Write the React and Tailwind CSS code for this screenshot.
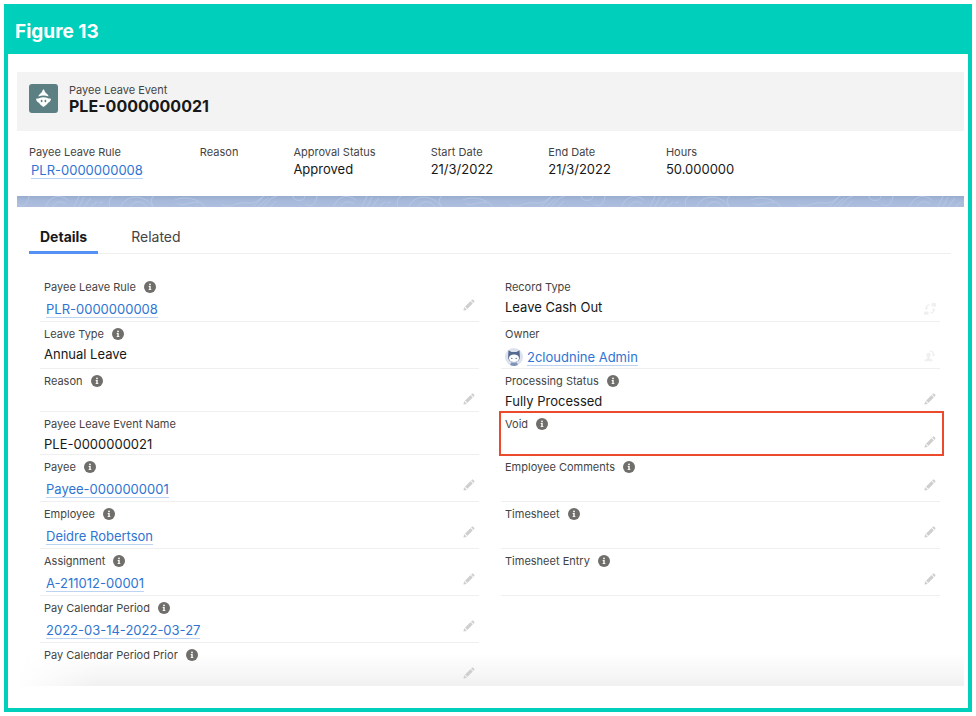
import React, { useState } from 'react';

const highlights = [
  { label: 'Payee Leave Rule', value: 'PLR-0000000008', link: true },
  { label: 'Reason', value: '' },
  { label: 'Approval Status', value: 'Approved' },
  { label: 'Start Date', value: '21/3/2022' },
  { label: 'End Date', value: '21/3/2022' },
  { label: 'Hours', value: '50.000000' },
];

const leftFields = [
  { label: 'Payee Leave Rule', value: 'PLR-0000000008', link: true, info: true, action: 'edit' },
  { label: 'Leave Type', value: 'Annual Leave', info: true, tall: true },
  { label: 'Reason', info: true, action: 'edit' },
  { label: 'Payee Leave Event Name', value: 'PLE-0000000021' },
  { label: 'Payee', value: 'Payee-0000000001', link: true, info: true, action: 'edit' },
  { label: 'Employee', value: 'Deidre Robertson', link: true, info: true, action: 'edit' },
  { label: 'Assignment', value: 'A-211012-00001', link: true, info: true, action: 'edit' },
  { label: 'Pay Calendar Period', value: '2022-03-14-2022-03-27', link: true, info: true, action: 'edit' },
  { label: 'Pay Calendar Period Prior', info: true, action: 'edit', last: true },
];

const rightFields = [
  { label: 'Record Type', value: 'Leave Cash Out', tall: true, action: 'change' },
  { label: 'Owner', value: '2cloudnine Admin', link: true, avatar: true, action: 'owner' },
  { label: 'Processing Status', value: 'Fully Processed', info: true, action: 'edit' },
  { label: 'Void', info: true, action: 'edit', marked: true },
  { label: 'Employee Comments', info: true, action: 'edit', tall: true },
  { label: 'Timesheet', info: true, action: 'edit', tall: true },
  { label: 'Timesheet Entry', info: true, action: 'edit', tall: true },
];

export default function App() {
  const [activeTab, setActiveTab] = useState('Details');

  return (
    <div className="bg-white p-1 font-['Inter',sans-serif] text-[#181818]">
      <div className="border-4 border-t-0 border-[#00cfbc]">
        <h1 className="bg-[#00cfbc] px-[7px] pt-[18px] pb-3 text-[19px] leading-5 font-bold text-white">Figure 13</h1>

        <div className="pt-[18px] pr-1 pb-[22px] pl-[9px]">
          <header className="flex items-center gap-[11px] bg-[#f3f3f3] px-3 pt-2.5 pb-[17px]">
            <RecordIcon />
            <div>
              <p className="text-[11px] leading-4 text-[#444]">Payee Leave Event</p>
              <h2 className="text-base leading-4 font-bold">PLE-0000000021</h2>
            </div>
          </header>

          <dl className="flex gap-[55px] px-3 pt-[13px] pb-[17px]">
            {highlights.map((item) => (
              <div key={item.label}>
                <dt className="text-[11px] leading-4 text-[#444]">{item.label}</dt>
                <dd className={`text-[13px] leading-[18px] ${item.link ? 'pt-px' : ''}`}>
                  {item.link ? <RecordLink>{item.value}</RecordLink> : item.value}
                </dd>
              </div>
            ))}
          </dl>

          <Contours />

          <div role="tablist" className="mr-[13px] ml-3 flex gap-[22px] border-b border-[#efefef] pt-[18px]">
            {['Details', 'Related'].map((tab) => (
              <button
                key={tab}
                role="tab"
                aria-selected={activeTab === tab}
                onClick={() => setActiveTab(tab)}
                className={`-mb-px border-b-3 px-[11px] pb-0.5 text-sm leading-6 ${activeTab === tab ? 'border-[#5590f5] font-bold' : 'border-transparent text-[#444]'}`}
              >
                {tab}
              </button>
            ))}
          </div>

          <div className="relative flex gap-[22px] pt-[21px] pr-6 pl-[23px]">
            <div className="pointer-events-none absolute inset-x-0 bottom-0 h-8 bg-linear-to-b from-transparent to-[#f1f1f1] mask-[linear-gradient(to_right,transparent,black_80px)]" />
            <FieldColumn fields={leftFields} />
            <FieldColumn fields={rightFields} />
          </div>
        </div>
      </div>
    </div>
  );
}

function FieldColumn({ fields }) {
  return (
    <dl className="relative min-w-0 flex-1">
      {fields.map((field) => (
        <Field key={field.label} {...field} />
      ))}
    </dl>
  );
}

function Field({ label, value, link, info, action, avatar, tall, marked, last }) {
  const height = link || tall ? 'min-h-[47px]' : 'min-h-[43px]';

  return (
    <div className={`relative flex justify-between border-b px-1 pt-1 ${height} ${last ? 'border-transparent' : 'border-[#efefef]'}`}>
      <div>
        <dt className="flex items-center gap-2 text-[11px] leading-4 text-[#444]">
          {label}
          {info && <InfoIcon label={label} />}
        </dt>
        {value && (
          <dd className={`flex items-center text-[13px] leading-5 ${link ? 'pt-1.5' : 'pt-0.5'}`}>
            {avatar && <Avatar />}
            {link ? <RecordLink>{value}</RecordLink> : value}
          </dd>
        )}
      </div>
      {action === 'edit' && (
        <button aria-label={`Edit ${label}`} className="mt-5 h-3 text-[#d0cfce]">
          <EditIcon />
        </button>
      )}
      {action === 'change' && (
        <button aria-label={`Change ${label}`} className="mt-6 h-3 text-[#efefef]">
          <ChangeTypeIcon />
        </button>
      )}
      {action === 'owner' && (
        <button aria-label={`Change ${label}`} className="mt-6 h-3 text-[#efefef]">
          <ChangeOwnerIcon />
        </button>
      )}
      {marked && <span className="pointer-events-none absolute -top-px -right-1 -bottom-0.5 -left-0.5 border-2 border-[#ec4a2c]" />}
    </div>
  );
}

function RecordLink({ children }) {
  return (
    <a href="#record" className="mx-0.5 inline-block border-b border-[#bcd4f2] leading-4 text-[#2e74d3]">
      {children}
    </a>
  );
}

function InfoIcon({ label }) {
  return (
    <svg role="img" aria-label={`Help ${label}`} viewBox="0 0 12 12" className="size-3">
      <circle cx="6" cy="6" r="6" fill="#706e6b" />
      <circle cx="6" cy="3.4" r="0.9" fill="#fff" />
      <path d="M4.7 5h2v3.2h.7v.9H4.6v-.9h.7V5.9h-.6z" fill="#fff" />
    </svg>
  );
}

function EditIcon() {
  return (
    <svg viewBox="0 0 52 52" fill="currentColor" className="size-3">
      <path d="M9.5 33.4l8.9 8.9c.4.4 1 .4 1.4 0L42 20c.4-.4.4-1 0-1.4l-8.8-8.8c-.4-.4-1-.4-1.4 0L9.5 32.1c-.4.4-.4 1 0 1.3zM36.1 5.7c-.4.4-.4 1 0 1.4l8.8 8.8c.4.4 1 .4 1.4 0l2.5-2.5c1.6-1.5 1.6-3.9 0-5.5l-4.7-4.7c-1.6-1.6-4.1-1.6-5.7 0zM2.1 48.2c-.2 1 .7 1.9 1.7 1.7l10.9-2.6c.4-.1.7-.3.9-.5l.2-.2c.2-.2.3-.9-.1-1.3l-9-9c-.4-.4-1.1-.3-1.3-.1l-.2.2c-.3.3-.4.6-.5.9z" />
    </svg>
  );
}

function ChangeTypeIcon() {
  return (
    <svg viewBox="0 0 12 12" fill="currentColor" className="size-3">
      <rect x="7.5" y="0" width="4.5" height="3.4" rx=".5" />
      <rect x="0" y="8.4" width="4.5" height="3.4" rx=".5" />
      <path d="M5.6 1.2v1.3C4 2.6 3.2 3.4 3.1 4.8h1.3L2.4 7 .4 4.8h1.3C1.8 2.5 3.3 1.2 5.6 1.2z" />
      <path d="M6.4 10.8V9.5C8 9.400 8.800 8.600 8.900 7.200H7.600L9.600 5l2 2.200h-1.300c-.1 2.300-1.600 3.600-3.900 3.600z" />
    </svg>
  );
}

function ChangeOwnerIcon() {
  return (
    <svg viewBox="0 0 12 12" fill="currentColor" className="size-3">
      <circle cx="4.5" cy="5" r="2.2" />
      <path d="M3.5 6.5h2v1.7l2.6 1.2c.5.3.6.8.6 1.8H.5c0-1 .1-1.5.6-1.800l2.400-1.200z" />
      <path d="M6 .6c2.600 0 4 1.400 4.200 3.700h1.200L9.600 6.400 7.800 4.300H9C8.800 2.800 7.900 1.900 6 1.800z" />
    </svg>
  );
}

function Avatar() {
  return (
    <svg viewBox="0 0 18 18" className="mr-0.5 size-[18px]">
      <circle cx="9" cy="9" r="9" fill="#dde3ee" />
      <path d="M3.500 2.200l3 1.700h5l3-1.700.3 5.300c.5 4.500-1.800 6.500-5.800 6.500s-6.300-2-5.800-6.500z" fill="#53698f" />
      <path d="M4 10.200c0-2.200 2-3.600 5-3.600s5 1.400 5 3.600S12 14 9 14s-5-1.600-5-3.800z" fill="#fff" />
      <circle cx="6.800" cy="10.400" r=".7" fill="#53698f" />
      <circle cx="11.200" cy="10.400" r=".7" fill="#53698f" />
      <path d="M6 14.500h6l.8 2.500a9 9 0 0 1-7.600 0z" fill="#7d93b8" />
    </svg>
  );
}

function RecordIcon() {
  return (
    <svg viewBox="0 0 29 29" className="size-[29px] shrink-0">
      <rect width="29" height="29" rx="3" fill="#5b7f82" />
      <path d="M14.500 5.500c.7 0 .9.700 1.100 1.400.4 1.400 1.700 2.300 2.700 3.300.8.700 1.100 1.300 1.200 2.200-3.300-1.200-6.700-1.200-10 0 .1-.9.400-1.500 1.200-2.200 1-1 2.300-1.900 2.700-3.300.2-.7.400-1.400 1.100-1.400z" fill="#fff" />
      <path d="M9.400 14.600c3.300-1.900 6.900-1.900 10.200 0 .8-.2 1.800-.1 2.300.3-.1 1.800-1.200 3.200-2.900 3.800-.8 1.900-2.700 3-4.500 4.300-1.800-1.300-3.700-2.400-4.500-4.300-1.700-.6-2.800-2-2.900-3.800.5-.4 1.500-.5 2.300-.3z" fill="#fff" />
      <ellipse cx="12.600" cy="17" rx=".9" ry="1.200" fill="#5b7f82" />
      <ellipse cx="16.400" cy="17" rx=".9" ry="1.200" fill="#5b7f82" />
    </svg>
  );
}

// decorative strip between the highlights panel and the tabs
function Contours() {
  return (
    <svg aria-hidden="true" className="block h-[11px] w-full">
      <defs>
        <linearGradient id="strip" x1="0" y1="0" x2="0" y2="1">
          <stop offset="0" stopColor="#98acce" />
          <stop offset="0.4" stopColor="#a7b9da" />
          <stop offset="1" stopColor="#adbede" />
        </linearGradient>
        <pattern id="contours" width="288" height="11" patternUnits="userSpaceOnUse">
          <g fill="none" stroke="#b9c8e4" strokeWidth="0.8">
            <path d="M-2 5c4 6 12 8 14-5M29 11c2-10 14-14 22-7M36 11c3-7 10-6 13-3M57 11l5-11M62 11l5-10M67 11l7-9M74 11l6-5M82 7l4-1M93 11c-2-5 0-9 3-11M104 11c3-12 24-14 32 0M113 11c4-7 13-7 17 0M137 11c-4-5-3-9 0-11M158 4c8-4 24-2 30 7M160 7c5 5 14-3 22 0M205 9c10 4 14-4 26-2 8 1 10-3 16-7M236 11l9-9M241 11l10-9M246 11c6-8 10-10 14-11M253 11l6-6M276 0c0 6 12 6 12 0" />
          </g>
        </pattern>
      </defs>
      <rect width="100%" height="11" fill="url(#strip)" />
      <rect width="100%" height="11" fill="url(#contours)" />
    </svg>
  );
}
